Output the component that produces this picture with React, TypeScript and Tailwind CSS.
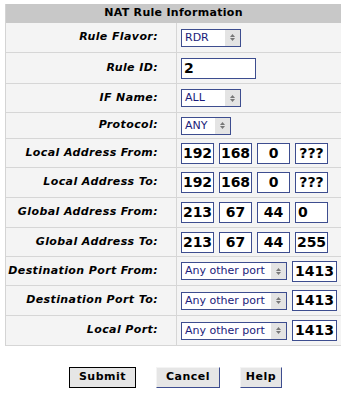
const font = { fontFamily: '"DejaVu Sans", Verdana, sans-serif' };

function Sel({ value, w }: { value: string; w: string }) {
  return (
    <div className={`flex h-[18px] items-stretch border border-[#3d4d8f] bg-white ${w}`}>
      <span className="flex-1 whitespace-nowrap pl-[3px] text-[11px] leading-[16px] text-[#1b1b7a]">{value}</span>
      <span className="flex w-[15px] flex-col items-center justify-center gap-[1px] bg-[#e4e4e4]">
        <svg width="5" height="3" viewBox="0 0 5 3"><path d="M0 3 L2.5 0 L5 3Z" fill="#777" /></svg>
        <svg width="5" height="3" viewBox="0 0 5 3"><path d="M0 0 L2.5 3 L5 0Z" fill="#777" /></svg>
      </span>
    </div>
  );
}

function Box({ value, w, left }: { value: string; w: string; left?: boolean }) {
  return (
    <div
      className={`flex h-[21px] items-center border border-[#3d4d8f] bg-white px-[2px] text-[14px] font-bold text-black ${w} ${left ? "justify-start" : "justify-center"}`}
    >
      {value}
    </div>
  );
}

function Ip({ parts }: { parts: { v: string; left?: boolean }[] }) {
  return (
    <div className="flex gap-[5px]">
      {parts.map((p, i) => (
        <Box key={i} value={p.v} w="w-[33px]" left={p.left} />
      ))}
    </div>
  );
}

function Port() {
  return (
    <div className="flex items-center gap-[5px]">
      <Sel value="Any other port" w="w-[106px]" />
      <Box value="1413" w="w-[45px]" />
    </div>
  );
}

const rows: { label: string; h: string; cell: React.ReactNode }[] = [
  { label: "Rule Flavor:", h: "h-[30px]", cell: <Sel value="RDR" w="w-[60px]" /> },
  { label: "Rule ID:", h: "h-[31px]", cell: <Box value="2" w="w-[75px]" left /> },
  { label: "IF Name:", h: "h-[29px]", cell: <Sel value="ALL" w="w-[60px]" /> },
  { label: "Protocol:", h: "h-[26px]", cell: <Sel value="ANY" w="w-[50px]" /> },
  { label: "Local Address From:", h: "h-[29px]", cell: <Ip parts={[{ v: "192" }, { v: "168" }, { v: "0" }, { v: "???" }]} /> },
  { label: "Local Address To:", h: "h-[30px]", cell: <Ip parts={[{ v: "192" }, { v: "168" }, { v: "0" }, { v: "???" }]} /> },
  { label: "Global Address From:", h: "h-[30px]", cell: <Ip parts={[{ v: "213" }, { v: "67" }, { v: "44" }, { v: "0", left: true }]} /> },
  { label: "Global Address To:", h: "h-[29px]", cell: <Ip parts={[{ v: "213" }, { v: "67" }, { v: "44" }, { v: "255" }]} /> },
  { label: "Destination Port From:", h: "h-[29px]", cell: <Port /> },
  { label: "Destination Port To:", h: "h-[30px]", cell: <Port /> },
  { label: "Local Port:", h: "h-[30px]", cell: <Port /> },
];

export default function App() {
  return (
    <div className="min-h-screen bg-white pt-[4px]" style={font}>
      <div className="ml-[5px] w-[336px] border-l border-[#d4d4d4]">
        <div className="flex h-[19px] items-center justify-center bg-[#c8c8c8] text-[11px] font-bold tracking-[0.3px] text-black">
          NAT Rule Information
        </div>
        {rows.map((r) => (
          <div key={r.label} className={`flex border-b border-[#d6d6d6] ${r.h}`}>
            <div className="flex w-[171px] items-center justify-end whitespace-nowrap border-r border-[#d6d6d6] bg-[#f4f4f4] pr-[18px] text-[11px] font-bold italic tracking-[0.4px] text-black">
              {r.label}
            </div>
            <div className="flex flex-1 items-center bg-[#f4f4f4] pl-[4px]">{r.cell}</div>
          </div>
        ))}
      </div>
      <div className="mt-[21px] flex justify-center gap-[20px] pl-[4px]">
        <button className="h-[21px] w-[67px] border border-black bg-[#e6e6e6] text-[11px] font-bold tracking-[0.5px] text-black">
          Submit
        </button>
        <button className="h-[21px] w-[64px] border border-[#f4f4f4] border-b-[#3d4d8f] border-r-[#3d4d8f] bg-[#e6e6e6] text-[11px] font-bold tracking-[0.5px] text-black">
          Cancel
        </button>
        <button className="h-[21px] w-[42px] border border-[#f4f4f4] border-b-[#3d4d8f] border-r-[#3d4d8f] bg-[#e6e6e6] text-[11px] font-bold tracking-[0.5px] text-black">
          Help
        </button>
      </div>
    </div>
  );
}
